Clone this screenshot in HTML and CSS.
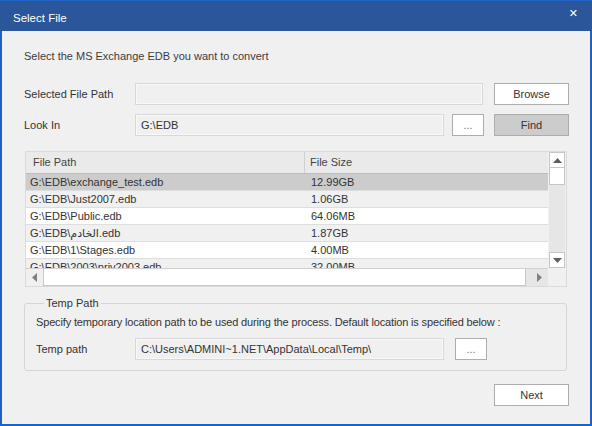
FILE: index.html
```html
<!DOCTYPE html>
<html>
	<head>
		<meta charset="UTF-8">
		<title>Select File</title>
		<link rel="stylesheet" href="styles.css">
	</head>
	<body>
		<div class="dialog">
			<div class="titlebar">
				<span class="title">Select File</span>
				<span class="close">&#x2715;</span>
			</div>
			<div class="content">
				<p class="intro">Select the MS Exchange EDB you want to convert</p>

				<div class="form-row first">
					<label class="lbl">Selected File Path</label>
					<div class="field wide"></div>
					<a href="javascript:;" class="btn browse">Browse</a>
				</div>
				<div class="form-row">
					<label class="lbl">Look In</label>
					<div class="field">G:\EDB</div>
					<a href="javascript:;" class="btn dots">...</a>
					<a href="javascript:;" class="btn find">Find</a>
				</div>

				<div class="list">
					<div class="rows">
						<div class="head">
							<div class="c1">File Path</div>
							<div class="c2">File Size</div>
						</div>
						<div class="row sel"><div class="c1">G:\EDB\exchange_test.edb</div><div class="c2">12.99GB</div></div>
						<div class="row alt"><div class="c1">G:\EDB\Just2007.edb</div><div class="c2">1.06GB</div></div>
						<div class="row"><div class="c1">G:\EDB\Public.edb</div><div class="c2">64.06MB</div></div>
						<div class="row alt"><div class="c1">G:\EDB\الخادم.edb</div><div class="c2">1.87GB</div></div>
						<div class="row"><div class="c1">G:\EDB\1\Stages.edb</div><div class="c2">4.00MB</div></div>
						<div class="row alt"><div class="c1">G:\EDB\2003\priv2003.edb</div><div class="c2">32.00MB</div></div>
					</div>
					<div class="vscroll">
						<div class="sb-btn"><svg width="9" height="5" viewBox="0 0 9 5"><path d="M0 5 L4.5 0 L9 5 Z" fill="#606060"/></svg></div>
						<div class="sb-thumb"></div>
						<div class="sb-track"></div>
						<div class="sb-btn"><svg width="9" height="5" viewBox="0 0 9 5"><path d="M0 0 L4.5 5 L9 0 Z" fill="#606060"/></svg></div>
					</div>
					<div class="hscroll">
						<div class="sb-btn"><svg width="5" height="9" viewBox="0 0 5 9"><path d="M5 0 L0 4.5 L5 9 Z" fill="#808080"/></svg></div>
						<div class="sb-thumb"></div>
						<div class="sb-btn"><svg width="5" height="9" viewBox="0 0 5 9"><path d="M0 0 L5 4.5 L0 9 Z" fill="#808080"/></svg></div>
					</div>
					<div class="corner"></div>
				</div>

				<fieldset class="temp">
					<legend>Temp Path</legend>
					<p class="desc">Specify temporary location path to be used during the process. Default location is specified below :</p>
					<div class="form-row">
						<label class="lbl">Temp path</label>
						<div class="field">C:\Users\ADMINI~1.NET\AppData\Local\Temp\</div>
						<a href="javascript:;" class="btn dots">...</a>
					</div>
				</fieldset>

				<div class="footer">
					<a href="javascript:;" class="btn">Next</a>
				</div>
			</div>
		</div>
	</body>
</html>
```

FILE: styles.css
```css
body, p{
	margin: 0;
	padding: 0;
}
body{
	font-family: "Liberation Sans", Arial, "DejaVu Sans", sans-serif;
	font-size: 11px;
	color: #333;
}
a{
	text-decoration: none;
}
.dialog{
	width: 592px;
	height: 426px;
	box-sizing: border-box;
	background: #f0f0f0;
	border: 2px solid #1e63c4;
	border-top: 0;
}
.titlebar{
	height: 31px;
	margin: 0 -2px;
	background: #2b579a;
	border-top: 1px solid #2163c9;
	box-sizing: border-box;
	display: flex;
	align-items: center;
	justify-content: space-between;
	padding: 4px 12px 0 13px;
	color: #fff;
}
.title{
	font-size: 11.5px;
}
.close{
	font-size: 11px;
	font-weight: bold;
	align-self: flex-start;
	margin-top: 2px;
	margin-right: 2px;
}
.content{
	padding: 18px 0 0 22px;
}
.intro{
	line-height: 14px;
	margin-bottom: 20px;
	color: #3c3c3c;
}
.form-row{
	display: flex;
	align-items: center;
	height: 22px;
	margin-top: 9px;
}
.form-row.first{
	margin-top: 0;
}
.lbl{
	width: 111px;
}
.field{
	width: 309px;
	height: 22px;
	box-sizing: border-box;
	border: 1px solid #d8d8d8;
	box-shadow: inset 0 0 0 1px #f8f8f8;
	background: #f0f0f0;
	line-height: 20px;
	padding-left: 5px;
	white-space: nowrap;
	overflow: hidden;
}
.field.wide{
	width: 348px;
}
.btn{
	display: inline-block;
	height: 22px;
	line-height: 20px;
	box-sizing: border-box;
	border: 1px solid #adadad;
	background: #fff;
	color: #333;
	text-align: center;
	width: 75px;
}
.browse{
	margin-left: 11px;
}
.dots{
	width: 32px;
	margin-left: 8px;
	color: #777;
}
.find{
	margin-left: 10px;
	background: #cccccc;
}
.list{
	width: 542px;
	height: 136px;
	box-sizing: border-box;
	margin: 15px 0 0 1px;
	border: 1px solid #dadada;
	background: #f0f0f0;
	display: grid;
	grid-template-columns: 522px 18px;
	grid-template-rows: 116px 18px;
}
.rows{
	overflow: hidden;
	background: #fff;
}
.head, .row{
	display: flex;
	white-space: nowrap;
}
.head{
	height: 22px;
	line-height: 21px;
	background: #eaeaea;
	border-bottom: 1px solid #bdbdbd;
	box-sizing: border-box;
	color: #444;
}
.c1{
	width: 279px;
	padding-left: 4px;
	box-sizing: border-box;
}
.c2{
	padding-left: 6px;
}
.head .c1{
	padding-left: 7px;
	border-right: 1px solid #d0d0d0;
}
.head .c2{
	padding-left: 5px;
}
.row{
	height: 17px;
	line-height: 17px;
	border-bottom: 1px solid #dedede;
	box-sizing: border-box;
	background: #fff;
}
.row.alt{
	background: #f0f0f0;
}
.row.sel{
	background: #cccccc;
}
.vscroll{
	display: flex;
	flex-direction: column;
	padding-left: 1px;
}
.vscroll .sb-btn, .vscroll .sb-thumb{
	width: 16px;
	height: 16px;
	box-sizing: border-box;
	border: 1px solid #c6c6c6;
	background: #fff;
	display: flex;
	align-items: center;
	justify-content: center;
}
.vscroll .sb-thumb{
	height: 17px;
	border-top: 0;
}
.sb-track{
	flex: 1;
	background: #e6e6e6;
	width: 16px;
}
.hscroll{
	display: flex;
	align-items: stretch;
	background: #e6e6e6;
	border-top: 1px solid #d0d0d0;
}
.hscroll .sb-btn{
	width: 17px;
	display: flex;
	align-items: center;
	justify-content: center;
	background: #f0f0f0;
}
.hscroll .sb-thumb{
	width: 483px;
	background: #fff;
	border: 1px solid #c8c8c8;
	border-top: 0;
	box-sizing: border-box;
}
.hscroll .sb-btn:last-child{
	margin-left: 5px;
	background: #e6e6e6;
}
.corner{
	background: #f0f0f0;
}
.temp{
	width: 543px;
	box-sizing: border-box;
	margin: 9px 0 0 0;
	padding: 0 0 10px 11px;
	border: 1px solid #d5d5d5;
	border-radius: 3px;
	min-width: 0;
}
.temp legend{
	margin-left: 8px;
	padding: 0 2px;
	line-height: 14px;
}
.desc{
	line-height: 14px;
	margin-top: 5px;
	letter-spacing: -0.15px;
}
.temp .form-row{
	margin-top: 9px;
}
.temp .lbl{
	width: 99px;
}
.temp .dots{
	margin-left: 11px;
}
.footer{
	margin: 13px 0 0 470px;
}
```
